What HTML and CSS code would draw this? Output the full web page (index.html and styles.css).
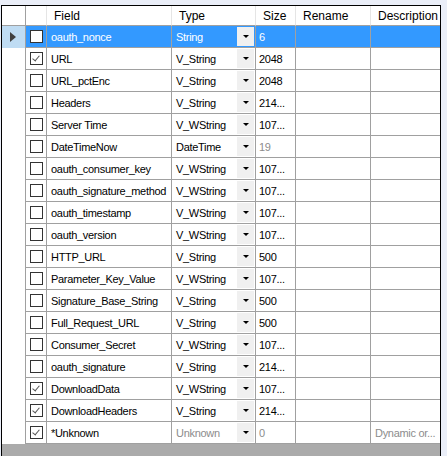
FILE: index.html
```html
<!DOCTYPE html>
<html lang="en">
<head>
    <meta charset="UTF-8">
    <title>Fields</title>
    <link rel="stylesheet" href="styles.css">
</head>
<body>
    <div class="grid">
        <table class="fields">
            <thead>
                <tr>
                    <th class="rowhead"></th>
                    <th class="c-check"></th>
                    <th class="c-field">Field</th>
                    <th class="c-type">Type</th>
                    <th class="c-size">Size</th>
                    <th class="c-rename">Rename</th>
                    <th class="c-desc">Description</th>
                </tr>
            </thead>
            <tbody>
                <tr class="selected">
                    <td class="rowhead"><span class="arrow"></span></td>
                    <td class="check"><span class="box"></span></td>
                    <td>oauth_nonce</td>
                    <td class="type"><div class="combo"><span>String</span><span class="drop"></span></div></td>
                    <td class="size">6</td>
                    <td></td>
                    <td></td>
                </tr>
                <tr>
                    <td class="rowhead"></td>
                    <td class="check"><span class="box checked"></span></td>
                    <td>URL</td>
                    <td class="type"><div class="combo"><span>V_String</span><span class="drop"></span></div></td>
                    <td class="size">2048</td>
                    <td></td>
                    <td></td>
                </tr>
                <tr>
                    <td class="rowhead"></td>
                    <td class="check"><span class="box"></span></td>
                    <td>URL_pctEnc</td>
                    <td class="type"><div class="combo"><span>V_String</span><span class="drop"></span></div></td>
                    <td class="size">2048</td>
                    <td></td>
                    <td></td>
                </tr>
                <tr>
                    <td class="rowhead"></td>
                    <td class="check"><span class="box"></span></td>
                    <td>Headers</td>
                    <td class="type"><div class="combo"><span>V_String</span><span class="drop"></span></div></td>
                    <td class="size">214...</td>
                    <td></td>
                    <td></td>
                </tr>
                <tr>
                    <td class="rowhead"></td>
                    <td class="check"><span class="box"></span></td>
                    <td>Server Time</td>
                    <td class="type"><div class="combo"><span>V_WString</span><span class="drop"></span></div></td>
                    <td class="size">107...</td>
                    <td></td>
                    <td></td>
                </tr>
                <tr>
                    <td class="rowhead"></td>
                    <td class="check"><span class="box"></span></td>
                    <td>DateTimeNow</td>
                    <td class="type"><div class="combo"><span>DateTime</span><span class="drop"></span></div></td>
                    <td class="size dim">19</td>
                    <td></td>
                    <td></td>
                </tr>
                <tr>
                    <td class="rowhead"></td>
                    <td class="check"><span class="box"></span></td>
                    <td>oauth_consumer_key</td>
                    <td class="type"><div class="combo"><span>V_WString</span><span class="drop"></span></div></td>
                    <td class="size">107...</td>
                    <td></td>
                    <td></td>
                </tr>
                <tr>
                    <td class="rowhead"></td>
                    <td class="check"><span class="box"></span></td>
                    <td>oauth_signature_method</td>
                    <td class="type"><div class="combo"><span>V_WString</span><span class="drop"></span></div></td>
                    <td class="size">107...</td>
                    <td></td>
                    <td></td>
                </tr>
                <tr>
                    <td class="rowhead"></td>
                    <td class="check"><span class="box"></span></td>
                    <td>oauth_timestamp</td>
                    <td class="type"><div class="combo"><span>V_WString</span><span class="drop"></span></div></td>
                    <td class="size">107...</td>
                    <td></td>
                    <td></td>
                </tr>
                <tr>
                    <td class="rowhead"></td>
                    <td class="check"><span class="box"></span></td>
                    <td>oauth_version</td>
                    <td class="type"><div class="combo"><span>V_WString</span><span class="drop"></span></div></td>
                    <td class="size">107...</td>
                    <td></td>
                    <td></td>
                </tr>
                <tr>
                    <td class="rowhead"></td>
                    <td class="check"><span class="box"></span></td>
                    <td>HTTP_URL</td>
                    <td class="type"><div class="combo"><span>V_String</span><span class="drop"></span></div></td>
                    <td class="size">500</td>
                    <td></td>
                    <td></td>
                </tr>
                <tr>
                    <td class="rowhead"></td>
                    <td class="check"><span class="box"></span></td>
                    <td>Parameter_Key_Value</td>
                    <td class="type"><div class="combo"><span>V_WString</span><span class="drop"></span></div></td>
                    <td class="size">107...</td>
                    <td></td>
                    <td></td>
                </tr>
                <tr>
                    <td class="rowhead"></td>
                    <td class="check"><span class="box"></span></td>
                    <td>Signature_Base_String</td>
                    <td class="type"><div class="combo"><span>V_String</span><span class="drop"></span></div></td>
                    <td class="size">500</td>
                    <td></td>
                    <td></td>
                </tr>
                <tr>
                    <td class="rowhead"></td>
                    <td class="check"><span class="box"></span></td>
                    <td>Full_Request_URL</td>
                    <td class="type"><div class="combo"><span>V_String</span><span class="drop"></span></div></td>
                    <td class="size">500</td>
                    <td></td>
                    <td></td>
                </tr>
                <tr>
                    <td class="rowhead"></td>
                    <td class="check"><span class="box"></span></td>
                    <td>Consumer_Secret</td>
                    <td class="type"><div class="combo"><span>V_WString</span><span class="drop"></span></div></td>
                    <td class="size">107...</td>
                    <td></td>
                    <td></td>
                </tr>
                <tr>
                    <td class="rowhead"></td>
                    <td class="check"><span class="box"></span></td>
                    <td>oauth_signature</td>
                    <td class="type"><div class="combo"><span>V_String</span><span class="drop"></span></div></td>
                    <td class="size">214...</td>
                    <td></td>
                    <td></td>
                </tr>
                <tr>
                    <td class="rowhead"></td>
                    <td class="check"><span class="box checked"></span></td>
                    <td>DownloadData</td>
                    <td class="type"><div class="combo"><span>V_WString</span><span class="drop"></span></div></td>
                    <td class="size">107...</td>
                    <td></td>
                    <td></td>
                </tr>
                <tr>
                    <td class="rowhead"></td>
                    <td class="check"><span class="box checked"></span></td>
                    <td>DownloadHeaders</td>
                    <td class="type"><div class="combo"><span>V_String</span><span class="drop"></span></div></td>
                    <td class="size">214...</td>
                    <td></td>
                    <td></td>
                </tr>
                <tr>
                    <td class="rowhead"></td>
                    <td class="check"><span class="box checked"></span></td>
                    <td>*Unknown</td>
                    <td class="type"><div class="combo dim"><span>Unknown</span><span class="drop"></span></div></td>
                    <td class="size dim">0</td>
                    <td></td>
                    <td class="dim">Dynamic or...</td>
                </tr>
            </tbody>
        </table>
        <div class="filler"></div>
    </div>
</body>
</html>
```

FILE: styles.css
```css
body {
    margin: 0;
    background-color: #eaeef8; /* window background */
    font-family: "Liberation Sans", Arial, sans-serif;
    font-size: 11px;
    color: #000;
    overflow: hidden;
}
.grid {
    margin: 5px 0 0 1px;
    width: 438px;
    border: 1px solid #000;
    border-bottom: none;
    background-color: #ababab;
}
.fields {
    width: 438px;
    table-layout: fixed;
    border-collapse: separate;
    border-spacing: 0;
    background-color: #fff;
}
th, td {
    box-sizing: border-box;
    padding: 0;
    overflow: hidden;
    white-space: nowrap;
}
th {
    height: 20px;
    font-weight: normal;
    font-size: 12px;
    text-align: left;
    padding-left: 7px;
    border-right: 1px solid #e5e5e5;
    border-bottom: 1px solid #a0a0a0;
}
th.rowhead { width: 24px; border-right: 1px solid #a0a0a0; }
th.c-check { width: 21px; }
th.c-field { width: 125px; }
th.c-type { width: 84px; }
th.c-size { width: 40px; }
th.c-rename { width: 75px; }
th.c-desc { width: 69px; border-right: none; }
td {
    height: 22px;
    padding-left: 4px;
    letter-spacing: -0.3px;
    border-right: 1px solid #a0a0a0;
    border-bottom: 1px solid #a0a0a0;
}
td:last-child {
    border-right: none;
}
td.rowhead {
    border-bottom: none;
    padding: 0;
}
td.check {
    padding-left: 4px;
}
td.size {
    padding-left: 3px;
}
td.type {
    padding-right: 1px;
}
.dim {
    color: #8c8c8c;
}
.selected td {
    background-color: #3399ff;
    color: #fff;
}
.selected td.rowhead {
    background-color: #bfdcf3;
}
.arrow {
    display: block;
    width: 0;
    height: 0;
    margin-left: 8px;
    border-top: 5px solid transparent;
    border-bottom: 5px solid transparent;
    border-left: 6px solid #404040;
}
.box {
    display: block;
    box-sizing: border-box;
    width: 13px;
    height: 13px;
    border: 1px solid #333;
    background-color: #fff;
    position: relative;
}
.box.checked::after {
    content: "";
    position: absolute;
    left: 3px;
    top: 1px;
    width: 3px;
    height: 6px;
    border-right: 1px solid #555;
    border-bottom: 1px solid #555;
    transform: rotate(40deg);
}
.combo {
    display: flex;
    align-items: center;
    justify-content: space-between;
}
.drop {
    width: 17px;
    height: 19px;
    background-color: #f0f0f0;
    position: relative;
}
.drop::after {
    content: "";
    position: absolute;
    left: 6px;
    top: 8px;
    border-left: 3px solid transparent;
    border-right: 3px solid transparent;
    border-top: 3px solid #000;
}
.filler {
    height: 20px;
}
```
